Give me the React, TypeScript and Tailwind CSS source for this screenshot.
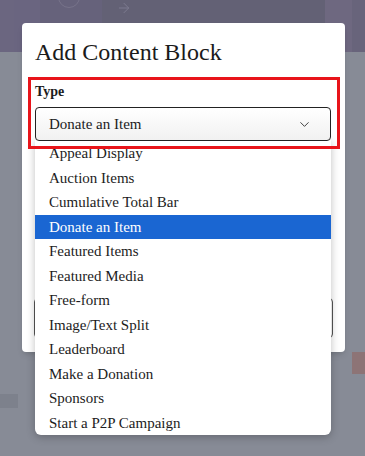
import React from 'react';
import { ChevronDown, ArrowRight } from 'lucide-react';

const OPTIONS = [
  'Appeal Display',
  'Auction Items',
  'Cumulative Total Bar',
  'Donate an Item',
  'Featured Items',
  'Featured Media',
  'Free-form',
  'Image/Text Split',
  'Leaderboard',
  'Make a Donation',
  'Sponsors',
  'Start a P2P Campaign',
];

const SELECTED = 'Donate an Item';
const serif = { fontFamily: '"Liberation Serif", "DejaVu Serif", serif' };

const App: React.FC = () => {
  return (
    <div className="relative w-[365px] h-[456px] overflow-hidden bg-[#878b96]" style={serif}>
      {/* dimmed page behind */}
      <div className="flex h-[52px]">
        <div className="w-[14px] bg-[#6b6680]" />
        <div className="w-[26px] bg-[#6a6580]" />
        <div className="w-[62px] bg-[#66627b] relative">
          <div className="absolute left-[18px] -top-[14px] w-[22px] h-[22px] rounded-full border border-[#77738a]" />
        </div>
        <div className="flex-1 bg-[#636175] pl-[14px] text-[#7d7b90]">
          <ArrowRight className="w-[16px] h-[16px]" strokeWidth={1.5} />
        </div>
        <div className="w-[27px] bg-[#6e6880]" />
        <div className="w-[13px] bg-[#68647b]" />
      </div>
      <div className="absolute right-0 top-[352px] w-[13px] h-[22px] bg-[#8d7476]" />
      <div className="absolute left-0 top-[394px] w-[18px] h-[14px] bg-[#7d818c]" />

      {/* modal */}
      <div className="absolute left-[22px] top-[23px] w-[323px] h-[329px] bg-white rounded-[4px] shadow-md">
        <h2 className="pl-[13px] pt-[14px] text-[24px] leading-[30px] text-[#1b1b1b]">Add Content Block</h2>
        <div className="mt-[231px] mx-[12px] h-[40px] border border-[#555] rounded-[4px]" />
      </div>

      {/* dropdown list */}
      <ul className="absolute left-[35px] top-[140px] w-[296px] bg-white rounded-b-[6px] shadow-[0_2px_8px_rgba(0,0,0,0.25)] pt-[1px] text-[15px] text-[#1c1c1c]">
        {OPTIONS.map((o) => (
          <li
            key={o}
            className={`h-[24.5px] flex items-center pl-[14px] ${o === SELECTED ? 'bg-[#1a66d2] text-white' : ''}`}
          >
            {o}
          </li>
        ))}
      </ul>

      {/* highlighted field */}
      <div className="absolute left-[28px] top-[77px] w-[312px] h-[72px] border-[3px] border-[#e8141a] pointer-events-none">
        <div className="pl-[4px] pt-[3px] text-[14px] font-bold text-[#1c1c1c] leading-[18px]">Type</div>
        <div className="ml-[4px] mt-[6px] w-[296px] h-[34px] bg-gradient-to-b from-white to-[#f1f1f1] border-[1.5px] border-[#222] rounded-[4px] flex items-center justify-between pl-[13px] pr-[18px] text-[15px] text-[#1c1c1c]">
          <span>Donate an Item</span>
          <ChevronDown className="w-[15px] h-[15px] text-[#333]" strokeWidth={1.5} />
        </div>
      </div>
    </div>
  );
};

export default App;
